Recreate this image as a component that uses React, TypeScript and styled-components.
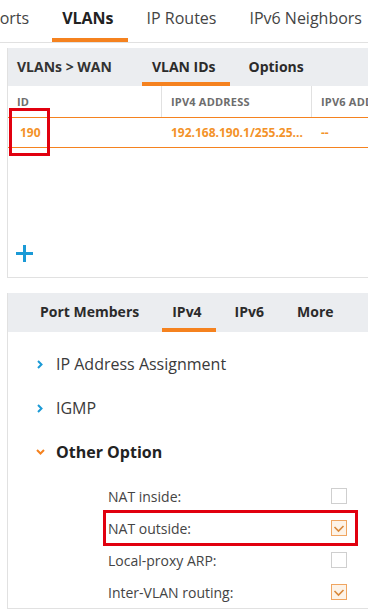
import React from "react";
import styled, { createGlobalStyle } from "styled-components";

const ORANGE = "#f5821f";
const ORANGE_TEXT = "#f39229";
const BLUE = "#1b9ad6";
const HEADER_BG = "#ebedf0";
const LINE = "#e1e1e1";

const Global = createGlobalStyle`
  html, body { margin: 0; padding: 0; background: #fff; }
  body { font-family: "Open Sans", "Noto Sans", sans-serif; color: #333; }
  * { box-sizing: border-box; }
`;

const Page = styled.div`
  position: relative;
  width: 368px;
  height: 610px;
  overflow: hidden;
  background: #fff;
`;

const TopBar = styled.div`
  display: flex;
  gap: 9px;
  height: 43px;
  margin-left: -20px;
  border-bottom: 1px solid ${LINE};
  white-space: nowrap;
`;

const TopTab = styled.div<{ $active?: boolean }>`
  display: flex;
  align-items: center;
  height: 42px;
  padding: 0 14px 2px 10px;
  font-size: 16px;
  font-weight: ${(p) => (p.$active ? 700 : 400)};
  color: ${(p) => (p.$active ? "#222" : "#444")};
  border-bottom: 4px solid ${(p) => (p.$active ? ORANGE : "transparent")};
`;

const Panel = styled.div<{ $top: number }>`
  margin-top: ${(p) => p.$top}px;
  margin-left: 7px;
  width: 390px;
  border-left: 1px solid ${LINE};
  border-bottom: 1px solid ${LINE};
  border-right: 1px solid ${LINE};
`;

const PanelHeader = styled.div<{ $h: number; $pad: number }>`
  display: flex;
  align-items: stretch;
  gap: 9px;
  height: ${(p) => p.$h}px;
  padding-left: ${(p) => p.$pad}px;
  background: ${HEADER_BG};
  white-space: nowrap;
`;

const Crumb = styled.div`
  display: flex;
  align-items: center;
  padding-bottom: 2px;
  font-size: 14px;
  font-weight: 700;
  color: #333;
  margin-right: 21px;
`;

const SubTab = styled.div<{ $active?: boolean }>`
  display: flex;
  align-items: center;
  padding: 2px 14px 0 10px;
  font-size: 14px;
  font-weight: 700;
  color: #2b2b2b;
  border-bottom: 4px solid ${(p) => (p.$active ? ORANGE : "transparent")};
`;

const TableHead = styled.div`
  display: grid;
  grid-template-columns: 153px 150px 1fr;
  height: 31px;
`;

const HeadCell = styled.div<{ $sep?: boolean }>`
  display: flex;
  align-items: center;
  padding-left: 9px;
  font-size: 11px;
  font-weight: 700;
  color: #6d6d6d;
  letter-spacing: 0.2px;
  border-left: ${(p) => (p.$sep ? `1px solid ${LINE}` : "none")};
  white-space: nowrap;
`;

const TableRow = styled.div`
  display: grid;
  grid-template-columns: 153px 150px 1fr;
  height: 31px;
  border-top: 1px solid ${ORANGE};
  border-bottom: 1px solid ${ORANGE};
`;

const RowCell = styled.div<{ $pad: number }>`
  display: flex;
  align-items: center;
  padding-left: ${(p) => p.$pad}px;
  font-size: 12px;
  font-weight: 700;
  color: ${ORANGE_TEXT};
  white-space: nowrap;
`;

const TableBody = styled.div`
  display: flex;
  align-items: flex-end;
  height: 129px;
  padding: 0 0 15px 8px;
`;

const AddButton = styled.button`
  display: flex;
  padding: 0;
  border: none;
  background: none;
  cursor: pointer;
`;

const Body = styled.div`
  padding-top: 10px;
`;

const AccRow = styled.div`
  display: flex;
  align-items: center;
  height: 44px;
  padding-left: 27px;
`;

const Chevron = styled.span`
  display: flex;
  justify-content: center;
  width: 10px;
  margin-right: 11px;
`;

const AccLabel = styled.span<{ $open?: boolean }>`
  font-size: 16px;
  font-weight: ${(p) => (p.$open ? 700 : 400)};
  color: ${(p) => (p.$open ? "#222" : "#3a3a3a")};
`;

const Options = styled.div`
  padding-top: 6px;
`;

const OptRow = styled.div`
  display: grid;
  grid-template-columns: 223px 16px;
  align-items: center;
  height: 32px;
  padding-left: 100px;
`;

const OptLabel = styled.span`
  font-size: 14px;
  color: #444;
`;

const Box = styled.span<{ $on?: boolean }>`
  display: flex;
  align-items: center;
  justify-content: center;
  width: 16px;
  height: 16px;
  border: 1px solid ${(p) => (p.$on ? "#f0a560" : "#cfcfcf")};
  background: ${(p) => (p.$on ? "#fdf3e8" : "#fff")};
`;

const Highlight = styled.div<{ $x: number; $y: number; $w: number; $h: number }>`
  position: absolute;
  left: ${(p) => p.$x}px;
  top: ${(p) => p.$y}px;
  width: ${(p) => p.$w}px;
  height: ${(p) => p.$h}px;
  border: 3px solid #e1000f;
  pointer-events: none;
`;

const Right = () => (
  <svg width="6" height="9" viewBox="0 0 6 9">
    <polyline points="1,1 4.5,4.5 1,8" fill="none" stroke={BLUE} strokeWidth="2" />
  </svg>
);

const Down = () => (
  <svg width="9" height="6" viewBox="0 0 9 6">
    <polyline points="1,1 4.5,4.5 8,1" fill="none" stroke={ORANGE} strokeWidth="2" />
  </svg>
);

const Check = () => (
  <svg width="12" height="9" viewBox="0 0 12 9">
    <polyline points="1.5,3 5.5,7 10.5,2" fill="none" stroke="#d9883a" strokeWidth="1.6" />
  </svg>
);

const Plus = () => (
  <svg width="17" height="17" viewBox="0 0 17 17">
    <path d="M8.5 0v17M0 8.5h17" stroke={BLUE} strokeWidth="3" />
  </svg>
);

const options = [
  { label: "NAT inside:", on: false },
  { label: "NAT outside:", on: true },
  { label: "Local-proxy ARP:", on: false },
  { label: "Inter-VLAN routing:", on: true },
];

export default function App() {
  return (
    <Page>
      <Global />
      <TopBar>
        <TopTab>Ports</TopTab>
        <TopTab $active>VLANs</TopTab>
        <TopTab>IP Routes</TopTab>
        <TopTab>IPv6 Neighbors</TopTab>
      </TopBar>

      <Panel $top={5}>
        <PanelHeader $h={38} $pad={9}>
          <Crumb>VLANs &gt; WAN</Crumb>
          <SubTab $active>VLAN IDs</SubTab>
          <SubTab>Options</SubTab>
        </PanelHeader>
        <TableHead>
          <HeadCell>ID</HeadCell>
          <HeadCell $sep>IPV4 ADDRESS</HeadCell>
          <HeadCell $sep>IPV6 ADDRESS</HeadCell>
        </TableHead>
        <TableRow>
          <RowCell $pad={12}>190</RowCell>
          <RowCell $pad={10}>192.168.190.1/255.25...</RowCell>
          <RowCell $pad={10}>--</RowCell>
        </TableRow>
        <TableBody>
          <AddButton aria-label="Add">
            <Plus />
          </AddButton>
        </TableBody>
      </Panel>

      <Panel $top={15}>
        <PanelHeader $h={39} $pad={22}>
          <SubTab>Port Members</SubTab>
          <SubTab $active>IPv4</SubTab>
          <SubTab>IPv6</SubTab>
          <SubTab>More</SubTab>
        </PanelHeader>
        <Body>
          <AccRow>
            <Chevron><Right /></Chevron>
            <AccLabel>IP Address Assignment</AccLabel>
          </AccRow>
          <AccRow>
            <Chevron><Right /></Chevron>
            <AccLabel>IGMP</AccLabel>
          </AccRow>
          <AccRow>
            <Chevron><Down /></Chevron>
            <AccLabel $open>Other Option</AccLabel>
          </AccRow>
          <Options>
            {options.map((o) => (
              <OptRow key={o.label}>
                <OptLabel>{o.label}</OptLabel>
                <Box $on={o.on}>{o.on && <Check />}</Box>
              </OptRow>
            ))}
          </Options>
        </Body>
      </Panel>

      <Highlight $x={9} $y={108} $w={41} $h={48} />
      <Highlight $x={103} $y={510} $w={255} $h={36} />
    </Page>
  );
}
